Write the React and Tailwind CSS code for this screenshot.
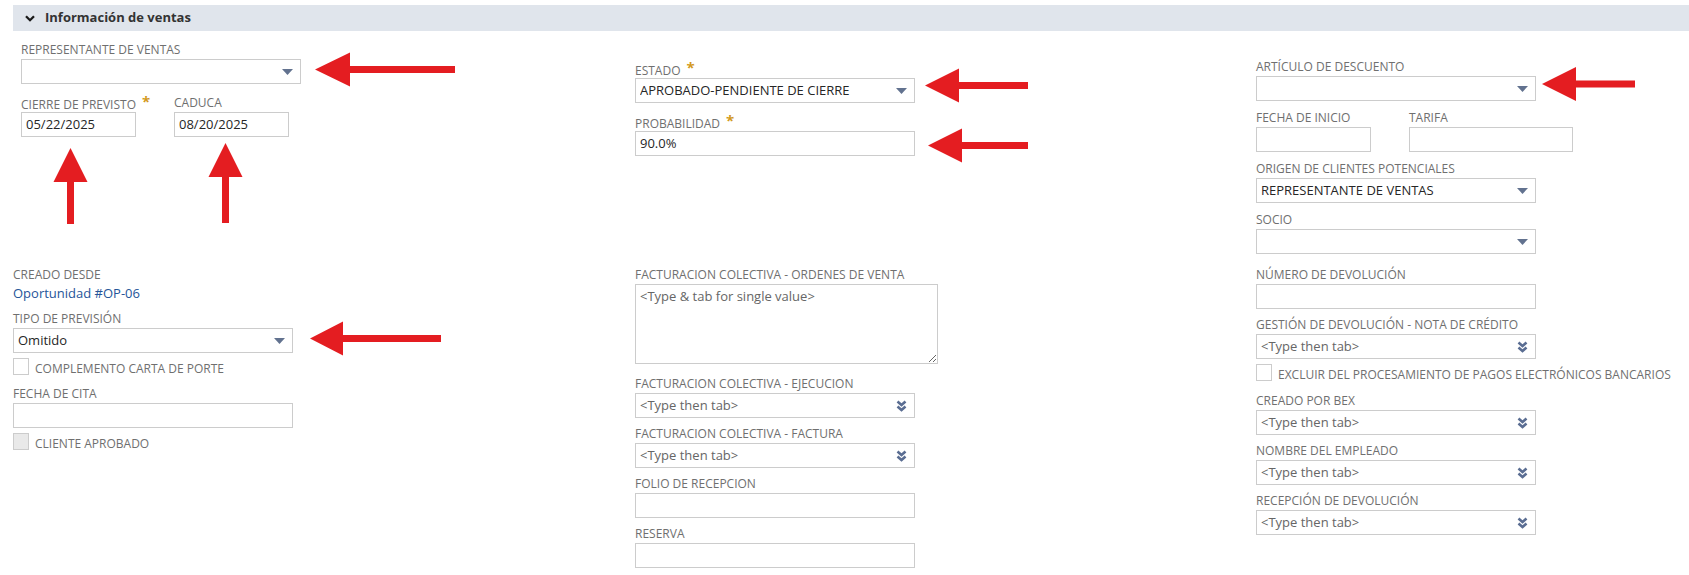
import React from 'react'

const FONT = { fontFamily: '"Open Sans", "Liberation Sans", sans-serif' }

function Label({ children, req }) {
  return (
    <div className="h-4 leading-4 mb-px text-[12px] text-[#6f6f6f] uppercase whitespace-nowrap">
      {children}
      {req && <span className="relative top-[-2px] ml-[6px] text-[15px] font-bold text-[#d39a1f]">*</span>}
    </div>
  )
}

function Caret() {
  return (
    <svg width="11" height="6" viewBox="0 0 11 6" className="shrink-0">
      <path d="M0 0 H11 L5.5 6 Z" fill="#62728f" />
    </svg>
  )
}

function DoubleChevron() {
  return (
    <svg width="11" height="12" viewBox="0 0 11 12" className="shrink-0">
      <path d="M1.5 1.5 L5.5 5 L9.5 1.5" fill="none" stroke="#5a6d92" strokeWidth="2.6" />
      <path d="M1.5 6.5 L5.5 10 L9.5 6.5" fill="none" stroke="#5a6d92" strokeWidth="2.6" />
    </svg>
  )
}

function Box({ children, icon }) {
  return (
    <div className="w-full h-[25px] border border-[#cccccc] bg-white flex items-center pl-[4px] pr-[7px] text-[13px] text-[#262626]">
      <div className="flex-1 truncate">{children}</div>
      {icon === 'caret' && <Caret />}
      {icon === 'double' && <DoubleChevron />}
    </div>
  )
}

function Field({ label, req, w = 'w-[280px]', icon, value, className = '' }) {
  return (
    <div className={`${w} shrink-0 ${className}`}>
      <Label req={req}>{label}</Label>
      <Box icon={icon}>{value}</Box>
    </div>
  )
}

function TypeTab() {
  return <span className="text-[#666]">&lt;Type then tab&gt;</span>
}

function Check({ label, disabled, className = '' }) {
  return (
    <div className={`flex items-end ${className}`}>
      <div className={`w-[16px] h-[17px] border border-[#cccccc] ${disabled ? 'bg-[#e9e9e9]' : 'bg-white'}`} />
      <span className="ml-[6px] leading-[13px] text-[12px] text-[#6f6f6f] uppercase whitespace-nowrap">{label}</span>
    </div>
  )
}

const ARROWS_LEFT = [
  { tx: 315, ty: 69.5, bx: 350, ex: 455 },
  { tx: 310, ty: 338.5, bx: 343, ex: 441 },
  { tx: 925, ty: 85.5, bx: 959, ex: 1028 },
  { tx: 928, ty: 145.5, bx: 962, ex: 1028 },
  { tx: 1542, ty: 84, bx: 1576, ex: 1635 },
]

const ARROWS_UP = [
  { tx: 70.5, ty: 148, by: 182, ey: 224 },
  { tx: 225.5, ty: 143, by: 177, ey: 223 },
]

function Arrows() {
  const h = 17
  const s = 3.5
  return (
    <svg className="absolute left-0 top-0 pointer-events-none" width="1689" height="575">
      {ARROWS_LEFT.map((a, i) => (
        <polygon
          key={'l' + i}
          fill="#e41d21"
          points={`${a.tx},${a.ty} ${a.bx},${a.ty - h} ${a.bx},${a.ty - s} ${a.ex},${a.ty - s} ${a.ex},${a.ty + s} ${a.bx},${a.ty + s} ${a.bx},${a.ty + h}`}
        />
      ))}
      {ARROWS_UP.map((a, i) => (
        <polygon
          key={'u' + i}
          fill="#e41d21"
          points={`${a.tx},${a.ty} ${a.tx + h},${a.by} ${a.tx + s},${a.by} ${a.tx + s},${a.ey} ${a.tx - s},${a.ey} ${a.tx - s},${a.by} ${a.tx - h},${a.by}`}
        />
      ))}
    </svg>
  )
}

export default function App() {
  return (
    <div className="relative w-[1689px] h-[575px] bg-white pt-[5px] overflow-hidden" style={FONT}>
      <div className="ml-[13px] h-[26px] bg-[#e0e5ec] flex items-center pl-[12px]">
        <svg width="10" height="7" viewBox="0 0 10 7">
          <path d="M1 1.2 L5 5.2 L9 1.2" fill="none" stroke="#1a1a1a" strokeWidth="2.3" />
        </svg>
        <span className="ml-[10px] text-[13px] font-bold text-[#333]">Información de ventas</span>
      </div>

      <div className="flex pl-[13px]">
        {/* columna 1 */}
        <div className="w-[622px] shrink-0">
          <div className="pl-[8px] pt-[11px]">
            <Field label="Representante de ventas" icon="caret" />
            <div className="flex gap-[38px] mt-[11px]">
              <Field label="Cierre de previsto" req w="w-[115px]" value="05/22/2025" />
              <Field label="Caduca" w="w-[115px]" value="08/20/2025" />
            </div>
          </div>
          <div className="mt-[130px]">
            <Label>Creado desde</Label>
            <div className="leading-[18px] text-[13px] text-[#255599]">Oportunidad #OP-06</div>
            <Field className="mt-[9px]" label="Tipo de previsión" icon="caret" value="Omitido" />
            <Check className="mt-[5px]" label="Complemento carta de porte" />
            <Field className="mt-[11px]" label="Fecha de cita" />
            <Check className="mt-[5px]" label="Cliente aprobado" disabled />
          </div>
        </div>

        {/* columna 2 */}
        <div className="w-[621px] shrink-0">
          <div className="pt-[30px]">
            <Field label="Estado" req icon="caret" value="APROBADO-PENDIENTE DE CIERRE" />
            <Field className="mt-[11px]" label="Probabilidad" req value="90.0%" />
          </div>
          <div className="mt-[111px]">
            <Label>Facturacion colectiva - Ordenes de venta</Label>
            <textarea
              className="block w-[303px] h-[80px] border border-[#cccccc] px-[4px] py-[2px] text-[13px] text-[#666] outline-none"
              defaultValue="<Type & tab for single value>"
              readOnly
            />
            <Field className="mt-[12px]" label="Facturacion colectiva - Ejecucion" icon="double" value={<TypeTab />} />
            <Field className="mt-[8px]" label="Facturacion colectiva - Factura" icon="double" value={<TypeTab />} />
            <Field className="mt-[8px]" label="Folio de recepcion" />
            <Field className="mt-[8px]" label="Reserva" />
          </div>
        </div>

        {/* columna 3 */}
        <div className="pt-[28px]">
          <Field label="Artículo de descuento" icon="caret" />
          <div className="flex gap-[38px] mt-[9px]">
            <Field label="Fecha de inicio" w="w-[115px]" />
            <Field label="Tarifa" w="w-[164px]" />
          </div>
          <Field className="mt-[9px]" label="Origen de clientes potenciales" icon="caret" value="REPRESENTANTE DE VENTAS" />
          <Field className="mt-[9px]" label="Socio" icon="caret" />
          <Field className="mt-[13px]" label="Número de devolución" />
          <Field className="mt-[8px]" label="Gestión de devolución - Nota de crédito" icon="double" value={<TypeTab />} />
          <Check className="mt-[5px]" label="Excluir del procesamiento de pagos electrónicos bancarios" />
          <Field className="mt-[12px]" label="Creado por BEX" icon="double" value={<TypeTab />} />
          <Field className="mt-[8px]" label="Nombre del empleado" icon="double" value={<TypeTab />} />
          <Field className="mt-[8px]" label="Recepción de devolución" icon="double" value={<TypeTab />} />
        </div>
      </div>

      <Arrows />
    </div>
  )
}
